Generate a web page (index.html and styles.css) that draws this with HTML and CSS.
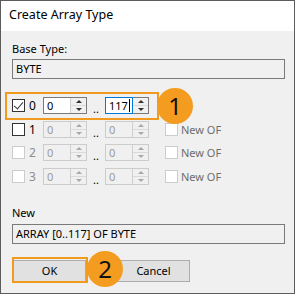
FILE: index.html
```html
<!DOCTYPE html>
<html>
<head>
<meta charset="utf-8">
<title>Create Array Type</title>
<link rel="stylesheet" href="styles.css">
</head>
<body>
<div class="window">
	<div class="titlebar">Create Array Type</div>
	<div class="content">
		<div class="label first">Base Type:</div>
		<div class="textbox">BYTE</div>

		<div class="rows">
			<!-- row 0 : active dimension -->
			<div class="row">
				<span class="check checked"></span>
				<span class="idx">0</span>
				<div class="spin">
					<span class="spintext">0</span>
					<span class="spinbtns"><i class="up"></i><i class="down"></i></span>
				</div>
				<span class="dots">..</span>
				<div class="spin focus">
					<span class="spintext">117<b class="caret"></b></span>
					<span class="spinbtns"><i class="up"></i><i class="down"></i></span>
				</div>
			</div>
			<div class="row">
				<span class="check"></span>
				<span class="idx">1</span>
				<div class="spin off">
					<span class="spintext">0</span>
					<span class="spinbtns"><i class="up"></i><i class="down"></i></span>
				</div>
				<span class="dots">..</span>
				<div class="spin off">
					<span class="spintext">0</span>
					<span class="spinbtns"><i class="up"></i><i class="down"></i></span>
				</div>
				<span class="check off newof"></span>
				<span class="newlabel">New OF</span>
			</div>
			<div class="row">
				<span class="check off"></span>
				<span class="idx off">2</span>
				<div class="spin off">
					<span class="spintext">0</span>
					<span class="spinbtns"><i class="up"></i><i class="down"></i></span>
				</div>
				<span class="dots">..</span>
				<div class="spin off">
					<span class="spintext">0</span>
					<span class="spinbtns"><i class="up"></i><i class="down"></i></span>
				</div>
				<span class="check off newof"></span>
				<span class="newlabel">New OF</span>
			</div>
			<div class="row">
				<span class="check off"></span>
				<span class="idx off">3</span>
				<div class="spin off">
					<span class="spintext">0</span>
					<span class="spinbtns"><i class="up"></i><i class="down"></i></span>
				</div>
				<span class="dots">..</span>
				<div class="spin off">
					<span class="spintext">0</span>
					<span class="spinbtns"><i class="up"></i><i class="down"></i></span>
				</div>
				<span class="check off newof"></span>
				<span class="newlabel">New OF</span>
			</div>
		</div>

		<div class="label second">New</div>
		<div class="textbox">ARRAY [0..117] OF BYTE</div>

		<div class="buttons">
			<button class="btn ok">OK</button>
			<button class="btn cancel">Cancel</button>
		</div>
	</div>

	<!-- callouts drawn over the dialog -->
	<div class="mark mark-row"></div>
	<div class="mark mark-ok"></div>
	<div class="badge badge-1">1</div>
	<div class="badge badge-2">2</div>
</div>
</body>
</html>
```

FILE: styles.css
```css
/* Create Array Type dialog */

* {
	box-sizing: border-box;
}
body {
	margin: 0;
	background: #fff;
	font-family: "Noto Sans", "Liberation Sans", sans-serif;
	font-size: 11px;
	color: #000;
}
.window {
	position: relative;
	width: 295px;
	height: 294px;
	border: 1px solid #5c5c5c;
	display: flex;
	flex-direction: column;
}
.titlebar {
	height: 30px;
	background: #fff;
	padding-left: 8px;
	font-size: 12.5px;
	line-height: 28px;
	color: #000;
}
.content {
	flex: 1;
	background: #f0f0f0;
	padding: 10px 10px 0 11px;
}

/* labels and read-only boxes */
.label {
	line-height: 16px;
	color: #000;
}
.label.second {
	margin-top: 20px;
}
.textbox {
	margin-top: 2px;
	height: 20px;
	border: 1px solid #7a7a7a;
	background: #f0f0f0;
	padding-left: 3px;
	line-height: 18px;
	width: 273px;
}
.label.second + .textbox {
	margin-top: 3px;
}

/* dimension rows */
.rows {
	margin-top: 18px;
	display: flex;
	flex-direction: column;
	gap: 6.5px;
}
.row {
	display: flex;
	align-items: center;
	height: 17px;
}
.check {
	width: 13px;
	height: 13px;
	border: 1px solid #333;
	background: #fff;
	flex: none;
	position: relative;
}
.check.off {
	border-color: #cccccc;
}
.check.checked::after {
	content: "";
	position: absolute;
	left: 3px;
	top: 0px;
	width: 4px;
	height: 8px;
	border: solid #333;
	border-width: 0 1px 1px 0;
	transform: rotate(40deg);
}
.idx {
	width: 18px;
	padding-left: 4px;
	line-height: 17px;
	font-size: 12px;
}
.idx.off {
	color: #8d8d8d;
}
.spin {
	width: 44px;
	height: 17px;
	display: flex;
	border: 1px solid #7a7a7a;
	background: #fff;
	flex: none;
}
.spin.off {
	border-color: #cccccc;
	background: #f0f0f0;
	color: #9a9a9a;
}
.spintext {
	flex: 1;
	padding-left: 3px;
	line-height: 15px;
	position: relative;
}
.spin.focus .spintext {
	outline: 1px solid #0078d7;
	outline-offset: 0;
}
.caret {
	display: inline-block;
	width: 1px;
	height: 13px;
	background: #000;
	vertical-align: -2px;
	margin-left: 1px;
}
.spinbtns {
	width: 16px;
	display: flex;
	flex-direction: column;
	border-left: 1px solid #cfcfcf;
	background: #f0f0f0;
}
.spinbtns i {
	flex: 1;
	display: flex;
	align-items: center;
	justify-content: center;
}
.spinbtns i.up {
	border-bottom: 1px solid #dadada;
}
.spinbtns i::after {
	content: "";
	border-left: 3px solid transparent;
	border-right: 3px solid transparent;
}
.spinbtns i.up::after {
	border-bottom: 3px solid #333;
}
.spinbtns i.down::after {
	border-top: 3px solid #333;
}
.spin.off .spinbtns i.up::after {
	border-bottom-color: #a8a8a8;
}
.spin.off .spinbtns i.down::after {
	border-top-color: #a8a8a8;
}
.dots {
	width: 18px;
	text-align: center;
	align-self: flex-end;
	line-height: 10px;
	height: 17px;
	padding-top: 7px;
	color: #000;
}
.check.newof {
	margin-left: 16px;
}
.newlabel {
	padding-left: 3px;
	color: #6d6d6d;
}

/* buttons */
.buttons {
	margin-top: 16px;
	display: flex;
	gap: 31px;
	padding-left: 1px;
}
.btn {
	width: 73px;
	height: 22px;
	border: 1px solid #adadad;
	background: #e1e1e1;
	font-family: inherit;
	font-size: 11px;
	color: #000;
	padding: 0;
}

/* orange call-outs */
.mark {
	position: absolute;
	border: 2px solid #f29a1f;
}
.mark-row {
	left: 4px;
	top: 91px;
	width: 154px;
	height: 28px;
}
.mark-ok {
	left: 11px;
	top: 256px;
	width: 76px;
	height: 26px;
}
.badge {
	position: absolute;
	width: 36px;
	height: 36px;
	border-radius: 50%;
	background: #f39c1f;
	color: #111;
	font-size: 24px;
	line-height: 36px;
	text-align: center;
}
.badge-1 {
	left: 156px;
	top: 87px;
}
.badge-2 {
	left: 86px;
	top: 250px;
}
```
